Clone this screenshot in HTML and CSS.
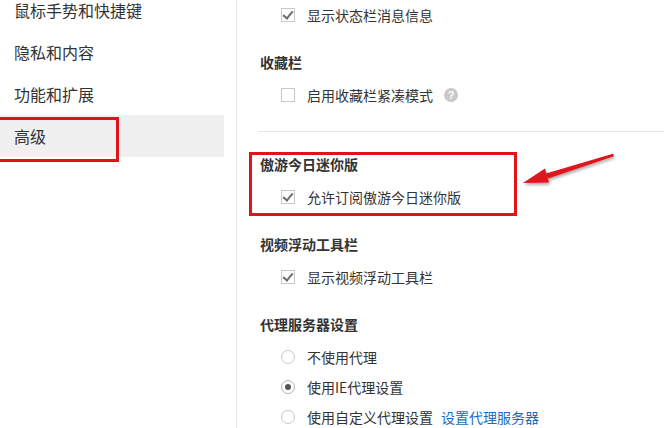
FILE: index.html
```html
<!DOCTYPE html>
<html lang="zh-CN">
<head>
  <meta charset="UTF-8">
  <title>设置 - 高级</title>
  <link rel="stylesheet" href="styles.css">
</head>
<body>
<div class="page">
  <div class="sidebar">
    <ul class="menu">
      <li class="menu-item">鼠标手势和快捷键</li>
      <li class="menu-item">隐私和内容</li>
      <li class="menu-item">功能和扩展</li>
      <li class="menu-item active">高级</li>
    </ul>
  </div>

  <div class="content">
    <div class="section">
      <label class="option"><span class="checkbox checked"></span>显示状态栏消息信息</label>
    </div>

    <div class="section">
      <div class="section-title">收藏栏</div>
      <label class="option"><span class="checkbox"></span>启用收藏栏紧凑模式<span class="help">?</span></label>
    </div>

    <div class="divider"></div>

    <div class="section">
      <div class="section-title">傲游今日迷你版</div>
      <label class="option"><span class="checkbox checked"></span>允许订阅傲游今日迷你版</label>
    </div>

    <div class="section">
      <div class="section-title">视频浮动工具栏</div>
      <label class="option"><span class="checkbox checked"></span>显示视频浮动工具栏</label>
    </div>

    <div class="section">
      <div class="section-title">代理服务器设置</div>
      <label class="option"><span class="radio"></span>不使用代理</label>
      <label class="option"><span class="radio selected"></span>使用IE代理设置</label>
      <label class="option"><span class="radio"></span>使用自定义代理设置<a class="link" href="#">设置代理服务器</a></label>
    </div>
  </div>

  <!-- 标注 -->
  <div class="mark mark-menu"></div>
  <div class="mark mark-section"></div>
  <svg class="arrow" width="110" height="50" viewBox="0 0 110 50">
    <defs>
      <filter id="shadow" x="-20%" y="-40%" width="140%" height="200%">
        <feDropShadow dx="1" dy="2" stdDeviation="1.5" flood-color="#000" flood-opacity="0.35"/>
      </filter>
    </defs>
    <g filter="url(#shadow)" fill="#e0121a">
      <polygon points="98,8.8 99,11.2 33,33.5 31,28.5"/>
      <polygon points="8,38 30,23.5 34,37.5"/>
    </g>
  </svg>
</div>
</body>
</html>
```

FILE: styles.css
```css
body {
  margin: 0;
  padding: 0;
  background-color: #fff;
  font-family: "Microsoft YaHei", "Noto Sans CJK SC", sans-serif;
  color: #333;
  overflow: hidden;
}

.page {
  position: relative;
  display: flex;
  height: 428px;
  overflow: hidden;
}

.sidebar {
  width: 236px;
  flex-shrink: 0;
  border-right: 1px solid #e6e6e6;
}

.menu {
  list-style: none;
  margin: -11px 0 0 0;
  padding: 0;
  width: 224px;
}

.menu-item {
  height: 20px;
  line-height: 20px;
  padding: 11px 0 11px 14px;
  font-size: 16px;
  color: #333;
}

.menu-item.active {
  background-color: #f0f0f0;
}

.content {
  flex: 1;
  padding: 0 0 0 21px;
}

.section {
  margin-bottom: 22px;
}

.section-title {
  height: 20px;
  line-height: 20px;
  padding-left: 2px;
  margin-bottom: 8px;
  font-size: 14px;
  font-weight: bold;
  color: #333;
}

.option {
  display: flex;
  align-items: center;
  height: 30px;
  padding-left: 23px;
  font-size: 14px;
  color: #333;
}

.checkbox {
  position: relative;
  box-sizing: border-box;
  width: 14px;
  height: 14px;
  margin-right: 12px;
  border: 1px solid #c8c8c8;
  background-color: #fff;
}

.checkbox.checked::after {
  content: "";
  position: absolute;
  left: 3px;
  top: 0px;
  width: 4px;
  height: 8px;
  border-right: 2px solid #6e6e6e;
  border-bottom: 2px solid #6e6e6e;
  transform: rotate(40deg);
}

.radio {
  position: relative;
  box-sizing: border-box;
  width: 14px;
  height: 14px;
  margin-right: 12px;
  border: 1px solid #c8c8c8;
  border-radius: 50%;
  background-color: #fff;
}

.radio.selected {
  border-color: #b0b0b0;
}

.radio.selected::after {
  content: "";
  position: absolute;
  left: 3px;
  top: 3px;
  width: 6px;
  height: 6px;
  border-radius: 50%;
  background-color: #555;
}

.help {
  display: inline-block;
  width: 14px;
  height: 14px;
  margin-left: 11px;
  border-radius: 50%;
  background-color: #c9c9c9;
  color: #fff;
  font-family: "Liberation Sans", Arial, sans-serif;
  font-size: 11px;
  font-weight: bold;
  line-height: 14px;
  text-align: center;
}

.link {
  margin-left: 8px;
  color: #1a6cc0;
  text-decoration: none;
}

.divider {
  height: 1px;
  margin: -1px 0 22px 0;
  background-color: #e6e6e6;
}

.mark {
  position: absolute;
  border: 3px solid #e0121a;
}

.mark-menu {
  left: -5px;
  top: 117px;
  width: 118px;
  height: 39px;
}

.mark-section {
  left: 249px;
  top: 152px;
  width: 262px;
  height: 58px;
}

.arrow {
  position: absolute;
  left: 515px;
  top: 145px;
}
```
